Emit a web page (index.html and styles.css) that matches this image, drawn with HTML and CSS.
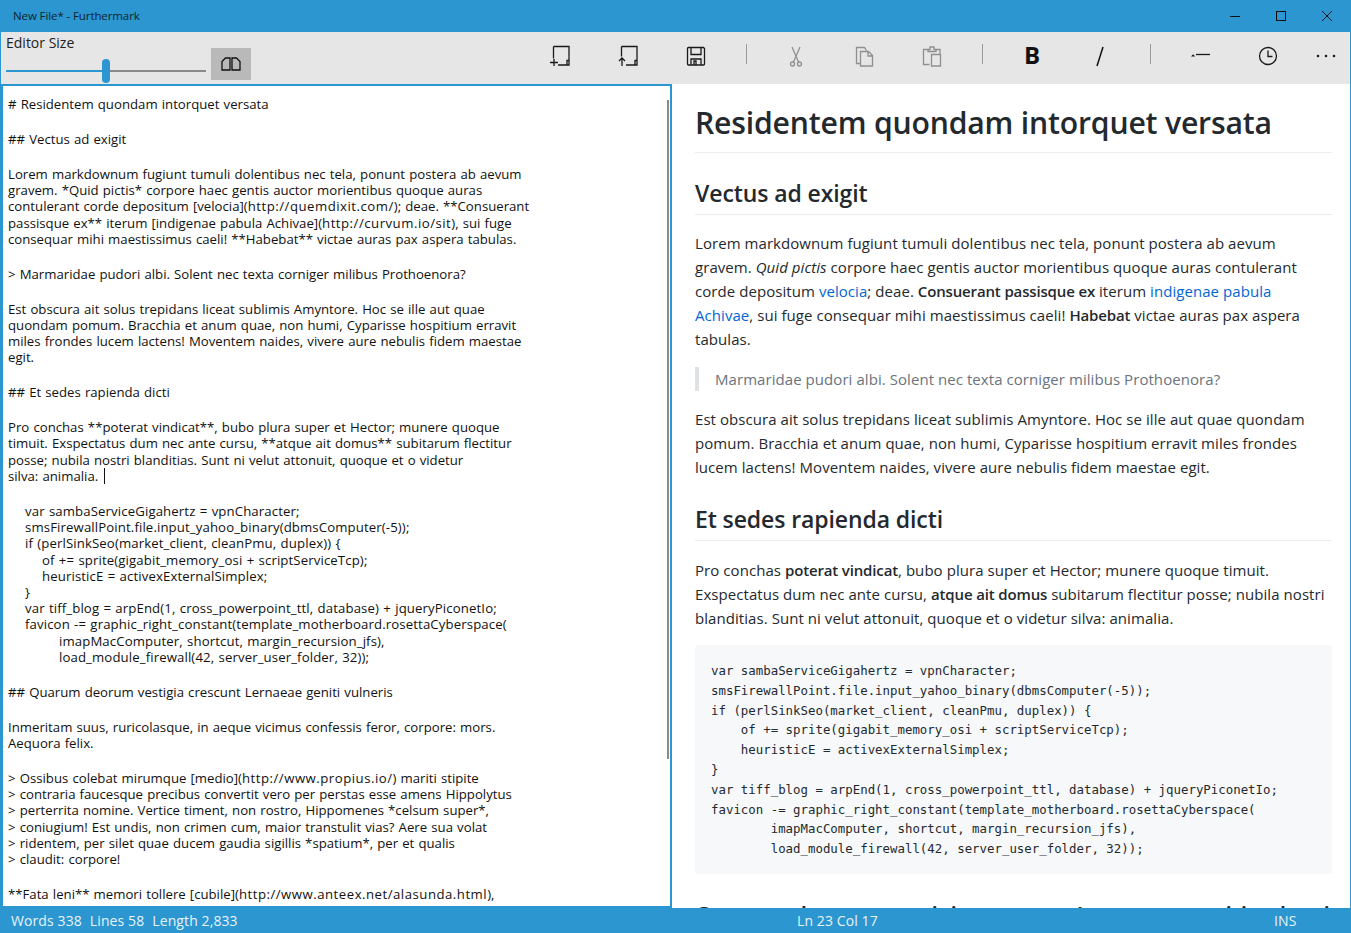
FILE: index.html
```html
<!DOCTYPE html>
<html lang="la">
<head>
<meta charset="utf-8">
<title>New File* - Furthermark</title>
<link rel="stylesheet" href="styles.css">
</head>
<body>
<div class="app">
  <header class="titlebar">
    <span class="title">New File* - Furthermark</span>
    <div class="caption">
      <span class="cap-btn"><svg width="12" height="12" viewBox="0 0 12 12"><path d="M1 6.500h10" class="ic"/></svg></span>
      <span class="cap-btn"><svg width="12" height="12" viewBox="0 0 12 12"><rect x="1.500" y="1.500" width="9" height="9" class="ic"/></svg></span>
      <span class="cap-btn"><svg width="12" height="12" viewBox="0 0 12 12"><path d="M1 1l10 10M11 1L1 11" class="ic"/></svg></span>
    </div>
  </header>
  <div class="toolbar">
    <div class="size-group">
      <div class="size-label">Editor Size</div>
      <div class="size-row">
        <div class="slider"><div class="track-on"></div><div class="thumb"></div><div class="track-off"></div></div>
        <div class="split-btn"><svg width="20" height="14" viewBox="0 0 20 14"><path d="M9 1H4.500L1 4.500V13H9zM11 1H15.500L19 4.500V13H11z" class="ic1"/></svg></div>
      </div>
    </div>
    <div class="commands">
      <button class="cmd"><svg width="24" height="24" viewBox="0 0 24 24"><path d="M5.500 2.500h15.500v18.500H10M5.500 2.500v12M2 18.500h8M6 15v7M19 21v-4.500h2V21" class="ic2"/></svg></button>
      <button class="cmd"><svg width="24" height="24" viewBox="0 0 24 24"><path d="M5.500 2.500h15.500v18.500H10M5.500 2.500v10M6 22v-7.500M3 17l3-3 3 3M19 21v-4.500h2V21" class="ic2"/></svg></button>
      <button class="cmd"><svg width="24" height="24" viewBox="0 0 24 24"><path d="M4.500 3.500h15l1 1v15.500a1 1 0 0 1-1 1h-15a1 1 0 0 1-1-1V4.500a1 1 0 0 1 1-1zM7 3.500v7h10v-7M7 21v-6h10v6M10 21v-4h2v4" class="ic2"/></svg></button>
      <span class="sep"></span>
      <button class="cmd"><svg width="24" height="24" viewBox="0 0 24 24" class="dim"><circle cx="8.500" cy="20" r="2" class="ic2"/><circle cx="15.500" cy="20" r="2" class="ic2"/><path d="M9.500 18L16 3M14.500 18L8 3" class="ic2"/></svg></button>
      <button class="cmd"><svg width="24" height="24" viewBox="0 0 24 24" class="dim"><path d="M8.500 19.500H4.500v-16h8l2 3M8.500 7.500h8l4 4v10.500h-12zM16 7.500v4.500h4.500" class="ic2"/></svg></button>
      <button class="cmd"><svg width="24" height="24" viewBox="0 0 24 24" class="dim"><path d="M9.500 20.500h-6V5.500h4.500M16 5.500h4v5M8 7.500V5.500h2V3h4v2.500h2v2zM11.500 10.500h9v11.500h-9z" class="ic2"/></svg></button>
      <span class="sep"></span>
      <button class="cmd"><span class="bold-glyph">B</span></button>
      <button class="cmd"><svg width="24" height="24" viewBox="0 0 24 24"><path d="M9 22L15 3" class="ic3"/></svg></button>
      <span class="sep"></span>
      <button class="cmd"><svg width="24" height="24" viewBox="0 0 24 24"><path d="M8 10.500h14" class="ic2"/><path d="M3 12.500h4.200L5.100 10.300z" class="fill"/></svg></button>
      <button class="cmd"><svg width="24" height="24" viewBox="0 0 24 24"><circle cx="12" cy="12" r="8.500" class="ic2"/><path d="M12 6.500V12.500h4.500" class="ic2"/></svg></button>
      <button class="cmd cmd-more"><svg width="24" height="24" viewBox="0 0 24 24"><circle cx="4" cy="12" r="1.300" class="fill"/><circle cx="12" cy="12" r="1.300" class="fill"/><circle cx="20" cy="12" r="1.300" class="fill"/></svg></button>
    </div>
  </div>
  <main class="panes">
    <section class="editor">
      <div class="editor-text">
        <p># Residentem quondam intorquet versata</p>
        <p>## Vectus ad exigit</p>
        <p>Lorem markdownum fugiunt tumuli dolentibus nec tela, ponunt postera ab aevum<br>gravem. *Quid pictis* corpore haec gentis auctor morientibus quoque auras<br>contulerant corde depositum [velocia](<span class="url">http://quemdixit.com/</span>); deae. **Consuerant<br>passisque ex** iterum [indigenae pabula Achivae](<span class="url">http://curvum.io/sit</span>), sui fuge<br>consequar mihi maestissimus caeli! **Habebat** victae auras pax aspera tabulas.</p>
        <p>&gt; Marmaridae pudori albi. Solent nec texta corniger milibus Prothoenora?</p>
        <p>Est obscura ait solus trepidans liceat sublimis Amyntore. Hoc se ille aut quae<br>quondam pomum. Bracchia et anum quae, non humi, Cyparisse hospitium erravit<br>miles frondes lucem lactens! Moventem naides, vivere aure nebulis fidem maestae<br>egit.</p>
        <p>## Et sedes rapienda dicti</p>
        <p>Pro conchas **poterat vindicat**, bubo plura super et Hector; munere quoque<br>timuit. Exspectatus dum nec ante cursu, **atque ait domus** subitarum flectitur<br>posse; nubila nostri blanditias. Sunt ni velut attonuit, quoque et o videtur<br>silva: animalia.<span class="caret"></span></p>
        <p class="indented">var sambaServiceGigahertz = vpnCharacter;<br>smsFirewallPoint.file.input_yahoo_binary(dbmsComputer(-5));<br>if (perlSinkSeo(market_client, cleanPmu, duplex)) {<br>    of += sprite(gigabit_memory_osi + scriptServiceTcp);<br>    heuristicE = activexExternalSimplex;<br>}<br>var tiff_blog = arpEnd(1, cross_powerpoint_ttl, database) + jqueryPiconetIo;<br>favicon -= graphic_right_constant(template_motherboard.rosettaCyberspace(<br>        imapMacComputer, shortcut, margin_recursion_jfs),<br>        load_module_firewall(42, server_user_folder, 32));</p>
        <p>## Quarum deorum vestigia crescunt Lernaeae geniti vulneris</p>
        <p>Inmeritam suus, ruricolasque, in aeque vicimus confessis feror, corpore: mors.<br>Aequora felix.</p>
        <p>&gt; Ossibus colebat mirumque [medio](<span class="url">http://www.propius.io/</span>) mariti stipite<br>&gt; contraria faucesque precibus convertit vero per perstas esse amens Hippolytus<br>&gt; perterrita nomine. Vertice timent, non rostro, Hippomenes *celsum super*,<br>&gt; coniugium! Est undis, non crimen cum, maior transtulit vias? Aere sua volat<br>&gt; ridentem, per silet quae ducem gaudia sigillis *spatium*, per et qualis<br>&gt; claudit: corpore!</p>
        <p>**Fata leni** memori tollere [cubile](<span class="url">http://www.anteex.net/alasunda.html</span>),</p>
      </div>
      <div class="scroll-thumb"></div>
    </section>
    <article class="preview">
      <h1>Residentem quondam intorquet versata</h1>
      <h2>Vectus ad exigit</h2>
      <p>Lorem markdownum fugiunt tumuli dolentibus nec tela, ponunt postera ab aevum<br>gravem. <em>Quid pictis</em> corpore haec gentis auctor morientibus quoque auras contulerant<br>corde depositum <a href="#a">velocia</a>; deae. <strong>Consuerant passisque ex</strong> iterum <a href="#b">indigenae pabula<br>Achivae</a>, sui fuge consequar mihi maestissimus caeli! <strong>Habebat</strong> victae auras pax aspera<br>tabulas.</p>
      <blockquote>Marmaridae pudori albi. Solent nec texta corniger milibus Prothoenora?</blockquote>
      <p>Est obscura ait solus trepidans liceat sublimis Amyntore. Hoc se ille aut quae quondam<br>pomum. Bracchia et anum quae, non humi, Cyparisse hospitium erravit miles frondes<br>lucem lactens! Moventem naides, vivere aure nebulis fidem maestae egit.</p>
      <h2 class="h2-b">Et sedes rapienda dicti</h2>
      <p class="before-code">Pro conchas <strong>poterat vindicat</strong>, bubo plura super et Hector; munere quoque timuit.<br>Exspectatus dum nec ante cursu, <strong>atque ait domus</strong> subitarum flectitur posse; nubila nostri<br>blanditias. Sunt ni velut attonuit, quoque et o videtur silva: animalia.</p>
      <pre>var sambaServiceGigahertz = vpnCharacter;
smsFirewallPoint.file.input_yahoo_binary(dbmsComputer(-5));
if (perlSinkSeo(market_client, cleanPmu, duplex)) {
    of += sprite(gigabit_memory_osi + scriptServiceTcp);
    heuristicE = activexExternalSimplex;
}
var tiff_blog = arpEnd(1, cross_powerpoint_ttl, database) + jqueryPiconetIo;
favicon -= graphic_right_constant(template_motherboard.rosettaCyberspace(
        imapMacComputer, shortcut, margin_recursion_jfs),
        load_module_firewall(42, server_user_folder, 32));</pre>
      <h2 class="h2-c">Quarum deorum vestigia crescunt Lernaeae geniti vulneris</h2>
    </article>
  </main>
  <footer class="status">
    <div class="st-left"><span>Words 338</span><span>Lines 58</span><span>Length 2,833</span></div>
    <div class="st-mid">Ln 23 Col 17</div>
    <div class="st-right">INS</div>
  </footer>
</div>
</body>
</html>
```

FILE: styles.css
```css
* { box-sizing: border-box; }
html, body { margin: 0; height: 100%; overflow: hidden; }
body { font-family: "Open Sans", "Noto Sans", sans-serif; color: #111; background: #fff; }
.app { height: 933px; width: 1351px; display: flex; flex-direction: column; border-left: 1px solid #2b96cf; border-right: 1px solid #2b96cf; }

.titlebar { height: 32px; flex: none; margin: 0 -1px; background: #2b96cf; display: flex; align-items: center; justify-content: space-between; }
.title { font-size: 11.500px; padding-left: 13px; color: #0d2430; letter-spacing: -0.1px; margin-top: -1px; }
.caption { display: flex; padding-right: 1px; }
.cap-btn { width: 46px; height: 32px; display: flex; align-items: center; justify-content: center; }
.cap-btn svg { display: block; }
.ic { fill: none; stroke: #111; stroke-width: 1; }
.ic1 { fill: none; stroke: #111; stroke-width: 1.300; }
.ic2 { fill: none; stroke: #1a1a1a; stroke-width: 1.300; }
.ic3 { fill: none; stroke: #111; stroke-width: 1.500; }
.fill { fill: #1a1a1a; }
.dim { opacity: .42; }

.toolbar { height: 52px; flex: none; background: #e6e6e6; display: flex; justify-content: space-between; }
.size-group { padding-left: 5px; }
.size-label { font-size: 14px; line-height: 20px; height: 16px; margin-top: 1px; color: #222; }
.size-row { display: flex; align-items: flex-start; gap: 5px; margin-top: -1px; }
.slider { width: 200px; height: 36px; display: flex; align-items: center; margin-top: 5px; }
.track-on { width: 96px; height: 2px; background: #2b96cf; }
.thumb { width: 8px; height: 24px; border-radius: 4px; background: #2b96cf; flex: none; }
.track-off { flex: 1; height: 2px; background: #8a8a8a; }
.split-btn { width: 40px; height: 32px; background: #b9b9b9; display: flex; align-items: center; justify-content: center; }

.commands { display: flex; align-items: flex-start; }
.cmd { width: 68px; height: 48px; border: 0; background: none; padding: 0; display: flex; align-items: center; justify-content: center; }
.cmd-more { width: 48px; }
.sep { width: 32px; height: 48px; display: flex; justify-content: center; align-items: center; }
.sep::before { content: ""; width: 1px; height: 20px; background: #9c9c9c; margin-top: -4px; }
.bold-glyph { font-family: "Open Sans", sans-serif; font-weight: 700; font-size: 24px; color: #111; line-height: 1; margin-top: -3px; }

.panes { flex: 1; min-height: 0; display: flex; }
.editor { width: 671px; flex: none; border: 2px solid #2b96cf; position: relative; overflow: hidden; background: #fff; }
.editor-text { padding: 10px 0 0 5px; font-size: 13.200px; line-height: 16.230px; word-spacing: 0.7px; color: #111; }
.editor-text p { margin: 0 0 18.700px; white-space: pre; }
.url { letter-spacing: 0.5px; }
.caret { display: inline-block; width: 1px; height: 16px; background: #111; vertical-align: -3px; margin-left: 6px; }
.indented { padding-left: 17px; letter-spacing: 0.12px; }
.scroll-thumb { position: absolute; right: 1px; top: 14px; width: 2px; height: 659px; background: #8a8a8a; }

.preview { flex: 1; min-width: 0; overflow: hidden; padding: 18px 18px 0 23px; color: #24292e; font-size: 15px; line-height: 24px; letter-spacing: 0.06px; white-space: nowrap; }
.preview h1 { margin: 0 0 26px; font-size: 30.200px; line-height: 42px; font-weight: 600; padding-bottom: 8px; border-bottom: 1px solid #eaecef; letter-spacing: -0.2px; }
.preview h2 { margin: 0 0 16px; font-size: 23px; line-height: 28px; font-weight: 600; padding-bottom: 7px; border-bottom: 1px solid #eaecef; letter-spacing: -0.1px; }
.preview .h2-b { margin: 25px 0 17px; line-height: 30px; padding-bottom: 6px; }
.preview .h2-c { margin-top: 27px; }
.preview p { margin: 0 0 16px; }
.preview .before-code { margin-bottom: 15px; }
.preview a { color: #0366d6; text-decoration: none; }
.preview strong { font-weight: 600; letter-spacing: -0.15px; }
.preview blockquote { margin: 0 0 16px; padding: 0 16px; border-left: 4px solid #dfe2e5; color: #6a737d; }
.preview pre { margin: 0 0 16px; padding: 16px 16px 0; background: #f6f8fa; border-radius: 3px; font-family: "DejaVu Sans Mono", monospace; font-size: 12.400px; line-height: 19.800px; height: 229px; color: #24292e; letter-spacing: 0; }

.status { height: 25px; flex: none; margin: 0 -1px; background: #2b96cf; color: #e8f3fa; font-size: 14px; letter-spacing: 0.1px; display: flex; align-items: center; }
.st-left { display: flex; gap: 8px; padding-left: 11px; flex: 1; }
.st-mid { width: 90px; margin-right: 387px; }
.st-right { width: 77px; }
```
